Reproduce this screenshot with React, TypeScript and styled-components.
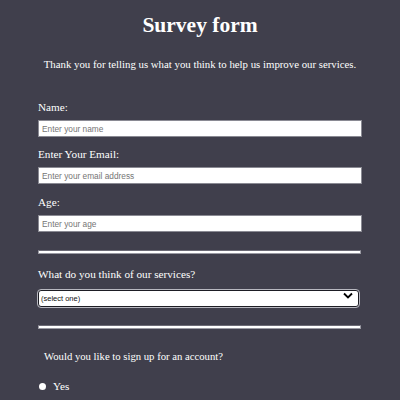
import React from "react";
import styled, { createGlobalStyle } from "styled-components";

const Global = createGlobalStyle`
  html, body { margin: 0; padding: 0; background: #403f4c; }
  body { font-family: "Liberation Serif", "DejaVu Serif", serif; color: #ffffff; }
`;

const Page = styled.div`
  width: 400px;
  height: 400px;
  overflow: hidden;
  background: #403f4c;
  display: flex;
  flex-direction: column;
  align-items: center;
`;

const Title = styled.h1`
  margin: 11px 0 0;
  font-size: 21.5px;
  line-height: 28px;
  font-weight: bold;
  text-align: center;
`;

const Subtitle = styled.p`
  margin: 17px 0 0;
  font-size: 10.8px;
  line-height: 16px;
  text-align: center;
`;

const Form = styled.form`
  width: 324px;
  margin-top: 27px;
  display: flex;
  flex-direction: column;
`;

const Label = styled.label<{ $top?: number }>`
  display: block;
  font-size: 11.2px;
  line-height: 16px;
  margin-top: ${(p) => p.$top ?? 0}px;
  margin-bottom: 5px;
`;

const TextInput = styled.input`
  box-sizing: border-box;
  width: 324px;
  height: 17px;
  margin: 0;
  padding: 0 3px;
  border: 1px solid #8a8a93;
  background: #ffffff;
  font-family: "Liberation Sans", Arial, sans-serif;
  font-size: 8.3px;
  color: #333;
  &::placeholder { color: #757575; }
`;

const Rule = styled.hr<{ $top: number }>`
  width: 321px;
  margin: ${(p) => p.$top}px 0 0;
  height: 2px;
  border: 1px solid #9a9aa3;
  border-top-color: #6c6b76;
  background: #ffffff;
  box-sizing: content-box;
`;

const SelectWrap = styled.div`
  position: relative;
  width: 321px;
  height: 17px;
`;

const Select = styled.select`
  box-sizing: border-box;
  width: 321px;
  height: 17px;
  margin: 0;
  padding: 0 2px;
  border: 1.5px solid #1d1d24;
  outline: 1px solid #b8b8c0;
  border-radius: 3px;
  background: #ffffff;
  appearance: none;
  font-family: "Liberation Sans", Arial, sans-serif;
  font-size: 7.5px;
  color: #111;
`;

const Chevron = styled.svg`
  position: absolute;
  right: 6px;
  top: 5px;
  pointer-events: none;
`;

const Question = styled.p`
  margin: 19px 0 0 6px;
  font-size: 10.7px;
  line-height: 16px;
`;

const RadioRow = styled.label`
  display: flex;
  align-items: center;
  gap: 7px;
  margin-top: 14px;
  margin-left: 1px;
  font-size: 11.2px;
  line-height: 16px;
`;

const RadioDot = styled.span`
  width: 7px;
  height: 7px;
  border-radius: 50%;
  background: #ffffff;
  display: inline-block;
`;

export default function App() {
  return (
    <>
      <Global />
      <Page>
        <Title>Survey form</Title>
        <Subtitle>Thank you for telling us what you think to help us improve our services.</Subtitle>
        <Form>
          <Label>Name:</Label>
          <TextInput placeholder="Enter your name" />
          <Label $top={9}>Enter Your Email:</Label>
          <TextInput placeholder="Enter your email address" />
          <Label $top={10}>Age:</Label>
          <TextInput placeholder="Enter your age" />
          <Rule $top={18} />
          <Label $top={12}>What do you think of our services?</Label>
          <SelectWrap>
            <Select defaultValue="">
              <option value="">(select one)</option>
            </Select>
            <Chevron width="10" height="7" viewBox="0 0 10 7">
              <path d="M1 1.5 L5 5.5 L9 1.5" fill="none" stroke="#000" strokeWidth="1.8" />
            </Chevron>
          </SelectWrap>
          <Rule $top={21} />
          <Question>Would you like to sign up for an account?</Question>
          <RadioRow>
            <RadioDot />
            Yes
          </RadioRow>
        </Form>
      </Page>
    </>
  );
}
